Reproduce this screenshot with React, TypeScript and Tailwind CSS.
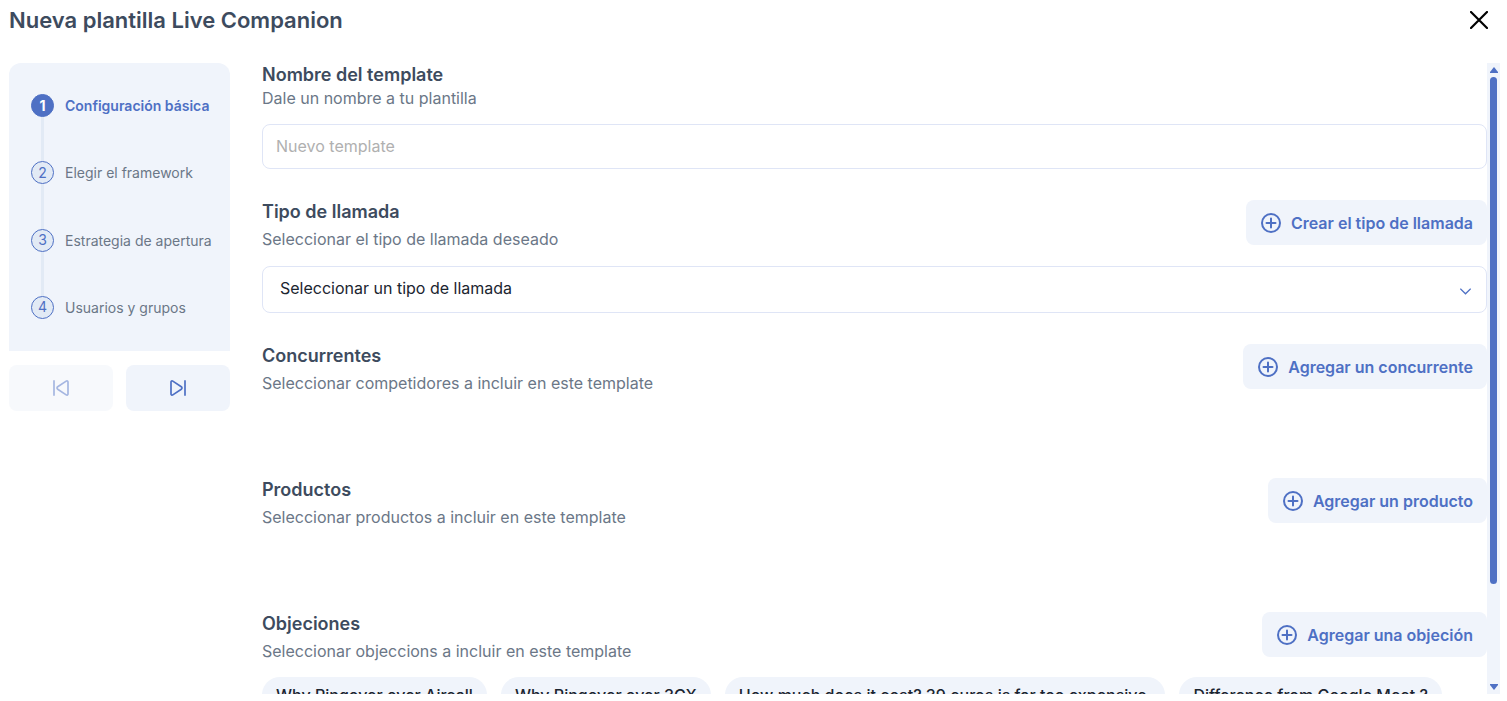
import React, { useState } from 'react';
import clsx from 'clsx';

const steps = ['Configuración básica', 'Elegir el framework', 'Estrategia de apertura', 'Usuarios y grupos'];

const objections = [
  'Why Ringover over Aircall',
  'Why Ringover over 3CX',
  'How much does it cost? 39 euros is far too expensive.',
  'Difference from Google Meet ?',
];

function PlusIcon() {
  return (
    <svg className="w-5 h-5 shrink-0" viewBox="0 0 20 20" fill="none" stroke="currentColor" strokeWidth="2" strokeLinecap="round" aria-hidden="true">
      <circle cx="10" cy="10" r="9" />
      <path d="M10 5.5v9M5.5 10h9" />
    </svg>
  );
}

function SkipIcon({ back = false }: { back?: boolean }) {
  return (
    <svg className="w-4 h-4" viewBox="0 0 16 16" fill="none" stroke="currentColor" strokeWidth="1.7" strokeLinecap="round" strokeLinejoin="round" aria-hidden="true">
      {back ? (
        <path d="M1 .9v14.2M15 2v12c0 1-1 1.4-1.800.9L4.7 9.2c-.9-.6-.9-1.8 0-2.4L13.2 1.1C14 .6 15 1 15 2z" />
      ) : (
        <path d="M15 .9v14.2M1 2v12c0 1 1 1.4 1.8.9l8.5-5.7c.9-.6.9-1.8 0-2.4L2.8 1.1C2 .6 1 1 1 2z" />
      )}
    </svg>
  );
}

function Stepper({ current }: { current: number }) {
  return (
    <ol className="flex flex-col h-72 py-[31px] pl-[22px] rounded-t-xl bg-[#f0f4fb]">
      {steps.map((label, i) => (
        <li key={label} className={clsx('flex gap-[11px]', i < steps.length - 1 && 'flex-1')}>
          <div className="flex flex-col items-center">
            <span
              className={clsx(
                'flex items-center justify-center w-[23px] h-[23px] rounded-full border border-[#4e70c4] text-sm',
                i === current ? 'bg-[#4e70c4] text-white font-bold' : 'bg-[#e2eaf5] text-[#4e70c4]'
              )}
            >
              {i + 1}
            </span>
            {i < steps.length - 1 && <span className="flex-1 w-[3px] bg-[#e2eaf5]" />}
          </div>
          <span className={clsx('text-sm leading-6', i === current ? 'font-semibold text-[#4e70c4]' : 'text-[#6b7787]')}>
            {label}
          </span>
        </li>
      ))}
    </ol>
  );
}

interface SectionProps {
  title: string;
  subtitle: string;
  action: string;
  children?: React.ReactNode;
}

function Section({ title, subtitle, action, children }: SectionProps) {
  return (
    <section className="mt-[31px]">
      <div className="flex items-start justify-between">
        <div>
          <h2 className="text-lg leading-6 font-semibold text-[#3d4b5e]">{title}</h2>
          <p className="mt-1 leading-[22px] text-[#6b7787]">{subtitle}</p>
        </div>
        <button type="button" className="flex items-center gap-[10px] h-[45px] pl-[15px] pr-[14px] rounded-lg bg-[#f0f4fb] font-semibold text-[#4e70c4] cursor-pointer">
          <PlusIcon />
          <span>{action}</span>
        </button>
      </div>
      {children || <div className="h-[53px]" />}
    </section>
  );
}

export default function App() {
  const [name, setName] = useState('');

  return (
    <div className="flex flex-col h-screen pl-[9px] pr-[7px] pb-[7px] bg-white font-['Inter',sans-serif] text-base">
      <header className="flex items-center justify-between h-10 mb-[23px] shrink-0 pr-3">
        <h1 className="text-[22px] leading-7 font-semibold text-[#3d4b5e]">Nueva plantilla Live Companion</h1>
        <button type="button" aria-label="Cerrar" className="text-black cursor-pointer">
          <svg className="w-[18px] h-[18px]" viewBox="0 0 18 18" fill="none" stroke="currentColor" strokeWidth="2.2" strokeLinecap="round">
            <path d="M1 1l16 16M17 1L1 17" />
          </svg>
        </button>
      </header>

      <div className="flex flex-1 min-h-0">
        <aside className="w-[221px] shrink-0 mr-8">
          <Stepper current={0} />
          <div className="grid grid-cols-2 gap-[13px] mt-[14px]">
            <button type="button" disabled aria-label="Anterior" className="flex items-center justify-center h-[46px] rounded-lg bg-[#f0f4fb] text-[#4e70c4] opacity-50">
              <SkipIcon back />
            </button>
            <button type="button" aria-label="Siguiente" className="flex items-center justify-center h-[46px] rounded-lg bg-[#f0f4fb] text-[#4e70c4] cursor-pointer">
              <SkipIcon />
            </button>
          </div>
        </aside>

        <main className="flex-1 min-w-0 overflow-y-auto [scrollbar-width:none]">
          <section>
            <label htmlFor="template-name" className="block text-lg leading-6 font-semibold text-[#3d4b5e]">
              Nombre del template
            </label>
            <p className="leading-[22px] text-[#6b7787]">Dale un nombre a tu plantilla</p>
            <input
              id="template-name"
              type="text"
              value={name}
              onChange={(e) => setName(e.target.value)}
              placeholder="Nuevo template"
              className="block w-full h-[45px] mt-[15px] px-[13px] pb-[2px] rounded-lg border border-[#dfe5f6] placeholder:text-[#b0b0b0]"
            />
          </section>

          <Section title="Tipo de llamada" subtitle="Seleccionar el tipo de llamada deseado" action="Crear el tipo de llamada">
            <div className="relative mt-4">
              <select aria-label="Tipo de llamada" className="block w-full h-[47px] px-[17px] pb-1 rounded-lg border border-[#dfe5f6] bg-white text-[#1b2530] appearance-none">
                <option>Seleccionar un tipo de llamada</option>
              </select>
              <svg className="absolute right-4 top-[22px] w-[11px] h-[7px] text-[#4e70c4] pointer-events-none" viewBox="0 0 11 7" fill="none" stroke="currentColor" strokeWidth="1.3">
                <path d="M.3.6l5.2 5.2L10.7.6" />
              </svg>
            </div>
          </Section>

          <Section title="Concurrentes" subtitle="Seleccionar competidores a incluir en este template" action="Agregar un concurrente" />

          <Section title="Productos" subtitle="Seleccionar productos a incluir en este template" action="Agregar un producto" />

          <Section title="Objeciones" subtitle="Seleccionar objeccions a incluir en este template" action="Agregar una objeción">
            <div className="flex flex-wrap gap-[14px] mt-[15px]">
              {objections.map((text) => (
                <button key={text} type="button" className="h-9 px-[14px] rounded-full bg-[#f0f4fb] font-medium text-[#1b2530] cursor-pointer">
                  {text}
                </button>
              ))}
            </div>
          </Section>
        </main>

        {/* scroll track */}
        <div className="flex flex-col items-center w-[13px] shrink-0 py-1 bg-[#f0f4fb] text-[#4e70c4]" aria-hidden="true">
          <svg className="w-2 h-[6px] shrink-0" viewBox="0 0 8 6" fill="currentColor">
            <path d="M4 0l4 5v1H0V5z" />
          </svg>
          <div className="flex-1 w-[7px] my-1">
            <div className="h-[84%] rounded-full bg-[#4e70c4]" />
          </div>
          <svg className="w-2 h-[6px] shrink-0" viewBox="0 0 8 6" fill="currentColor">
            <path d="M4 6l4-5V0H0v1z" />
          </svg>
        </div>
      </div>
    </div>
  );
}
